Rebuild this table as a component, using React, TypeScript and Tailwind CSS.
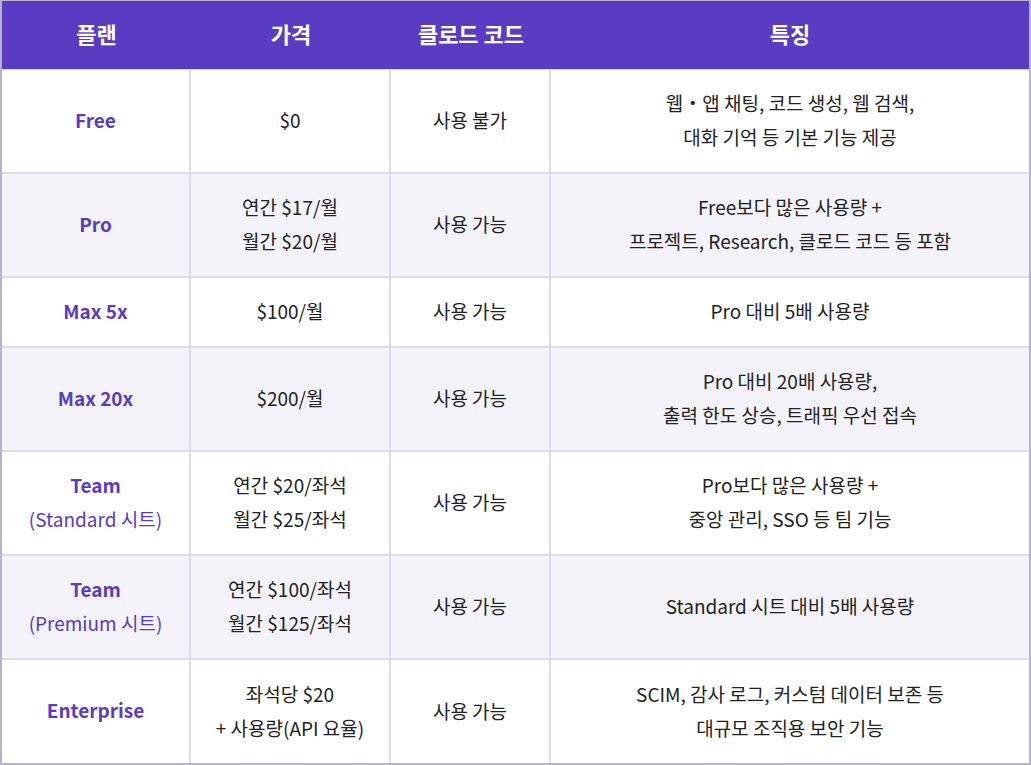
import React from "react";

type Row = {
  plan: string;
  sub?: string;
  price: string[];
  code: string;
  feat: string[];
  h: string;
};

const rows: Row[] = [
  { plan: "Free", price: ["$0"], code: "사용 불가", feat: ["웹・앱 채팅, 코드 생성, 웹 검색,", "대화 기억 등 기본 기능 제공"], h: "h-[104px]" },
  { plan: "Pro", price: ["연간 $17/월", "월간 $20/월"], code: "사용 가능", feat: ["Free보다 많은 사용량 +", "프로젝트, Research, 클로드 코드 등 포함"], h: "h-[104px]" },
  { plan: "Max 5x", price: ["$100/월"], code: "사용 가능", feat: ["Pro 대비 5배 사용량"], h: "h-[70px]" },
  { plan: "Max 20x", price: ["$200/월"], code: "사용 가능", feat: ["Pro 대비 20배 사용량,", "출력 한도 상승, 트래픽 우선 접속"], h: "h-[104px]" },
  { plan: "Team", sub: "(Standard 시트)", price: ["연간 $20/좌석", "월간 $25/좌석"], code: "사용 가능", feat: ["Pro보다 많은 사용량 +", "중앙 관리, SSO 등 팀 기능"], h: "h-[104px]" },
  { plan: "Team", sub: "(Premium 시트)", price: ["연간 $100/좌석", "월간 $125/좌석"], code: "사용 가능", feat: ["Standard 시트 대비 5배 사용량"], h: "h-[104px]" },
  { plan: "Enterprise", price: ["좌석당 $20", "+ 사용량(API 요율)"], code: "사용 가능", feat: ["SCIM, 감사 로그, 커스텀 데이터 보존 등", "대규모 조직용 보안 기능"], h: "h-[103px]" },
];

export default function App() {
  return (
    <div
      className="w-[1031px] h-[765px] bg-[#b7b3ca] pl-[2px] pr-[2px] pt-[1px] pb-[2px]"
      style={{ fontFamily: '"Noto Sans CJK KR", "Noto Sans", sans-serif' }}
    >
      <div className="flex flex-col w-full h-full bg-white">
        <div className="flex h-[69px] bg-[#5a3bc3] text-white font-bold text-[22px] border-b-[1px] border-[#dcd8ee] pb-[3px]">
          <div className="w-[189px] flex items-center justify-center">플랜</div>
          <div className="w-[200px] flex items-center justify-center">가격</div>
          <div className="w-[160px] flex items-center justify-center">클로드 코드</div>
          <div className="flex-1 flex items-center justify-center">특징</div>
        </div>
        {rows.map((r, i) => (
          <div
            key={i}
            className={`flex ${r.h} ${i % 2 === 1 ? "bg-[#f4f3f9]" : "bg-white"} ${i < rows.length - 1 ? "border-b-2 border-[#dedbee]" : ""} text-[19px] leading-[34px] text-[#222222]`}
          >
            <div className="w-[189px] border-r-2 border-[#dedbee] flex flex-col items-center justify-center pb-[3px] text-[#5a3bc3]">
              <div className="font-bold">{r.plan}</div>
              {r.sub && <div>{r.sub}</div>}
            </div>
            <div className="w-[200px] border-r-2 border-[#dedbee] flex flex-col items-center justify-center pb-[2px]">
              {r.price.map((p, j) => (
                <div key={j}>{p}</div>
              ))}
            </div>
            <div className="w-[160px] border-r-2 border-[#dedbee] flex items-center justify-center pb-[2px]">{r.code}</div>
            <div className="flex-1 flex flex-col items-center justify-center pb-[2px]">
              {r.feat.map((f, j) => (
                <div key={j}>{f}</div>
              ))}
            </div>
          </div>
        ))}
      </div>
    </div>
  );
}
